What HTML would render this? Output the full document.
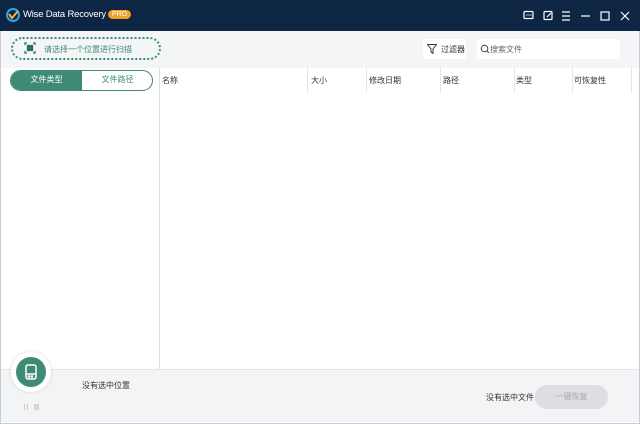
<!DOCTYPE html><html><head><meta charset="utf-8"><style>
*{margin:0;padding:0;box-sizing:border-box}
body{width:640px;height:424px;overflow:hidden;background:#fff;font-family:"Liberation Sans","Noto Sans CJK SC",sans-serif;position:relative;font-size:8px;color:#333}
.a{position:absolute}
</style></head><body>
<div class="a" style="left:0;top:0;width:640px;height:424px;border:1px solid #c9ccd0"></div>
<div class="a" style="left:0;top:0;width:640px;height:31px;background:#0c2643"></div>
<svg class="a" style="left:5px;top:7px" width="16" height="16" viewBox="0 0 16 16"><circle cx="8" cy="8" r="6" fill="none" stroke="#3aa0e6" stroke-width="2"/><path d="M4 7l3 4 6-7" stroke="#f5b342" stroke-width="2" fill="none"/></svg>
<div class="a" style="left:23px;top:9px;color:#fff;font-size:9.5px;letter-spacing:-0.2px;white-space:nowrap">Wise Data Recovery</div>
<div class="a" style="left:108px;top:10px;width:23px;height:9px;border-radius:5px;background:#f0a029;color:#fff;font-size:7px;line-height:9px;text-align:center">PRO</div>
<svg class="a" style="left:522px;top:10px" width="115" height="12" viewBox="0 0 115 12" stroke="#fff" fill="none" stroke-width="1.2"><rect x="2" y="1.5" width="9" height="7" rx="1"/><path d="M4.5 5h1M6.5 5h1M8.5 5h1"/><rect x="22" y="1.5" width="8" height="8" rx="1"/><path d="M25 7l4-4"/><path d="M40 2h8M40 6h8M40 10h8"/><path d="M59 6h9"/><rect x="79" y="2" width="8" height="8"/><path d="M99 2l8 8M107 2l-8 8"/></svg>
<div class="a" style="left:1px;top:31px;width:638px;height:37px;background:#f4f5f7"></div>
<div class="a" style="left:11px;top:37px;width:150px;height:23px;border:2px dotted #3e8a74;border-radius:12px"></div>
<svg class="a" style="left:24px;top:42px" width="12" height="12" viewBox="0 0 12 12" fill="none" stroke="#2f6f5f" stroke-width="1.3"><path d="M1 3V1h2M9 1h2v2M11 9v2H9M3 11H1V9"/><rect x="3.5" y="3.5" width="5" height="5" fill="#2f6f5f"/></svg>
<div class="a" style="left:44px;top:44px;color:#3e8a74;font-size:8px">请选择一个位置进行扫描</div>
<div class="a" style="left:423px;top:39px;width:43px;height:20px;background:#fff;border-radius:2px"></div>
<svg class="a" style="left:427px;top:44px" width="10" height="10" viewBox="0 0 10 10"><path d="M0.5 0.5h9L6 5v4.5L4 8V5z" fill="none" stroke="#333"/></svg>
<div class="a" style="left:441px;top:44px;font-size:8px">过滤器</div>
<div class="a" style="left:477px;top:39px;width:143px;height:20px;background:#fff;border-radius:2px"></div>
<svg class="a" style="left:480px;top:44px" width="10" height="10" viewBox="0 0 10 10"><circle cx="4.5" cy="4.5" r="3.3" fill="none" stroke="#444"/><path d="M7 7l2 2" stroke="#444"/></svg>
<div class="a" style="left:490px;top:44px;font-size:8px;color:#666">搜索文件</div>
<div class="a" style="left:159px;top:68px;width:1px;height:301px;background:#dcdfe3"></div>
<div class="a" style="left:10px;top:70px;width:143px;height:21px;border:1.5px solid #3e8a74;border-radius:11px;overflow:hidden;background:#fff"><div style="width:71px;height:100%;background:#3e8a74;color:#fff;line-height:18px;text-align:center;font-size:8px">文件类型</div><div class="a" style="left:71px;top:0;width:71px;line-height:18px;text-align:center;color:#3e8a74;font-size:8px">文件路径</div></div>
<div class="a" style="left:162px;top:75px;font-size:8px">名称</div>
<div class="a" style="left:311px;top:75px;font-size:8px">大小</div>
<div class="a" style="left:369px;top:75px;font-size:8px">修改日期</div>
<div class="a" style="left:443px;top:75px;font-size:8px">路径</div>
<div class="a" style="left:516px;top:75px;font-size:8px">类型</div>
<div class="a" style="left:574px;top:75px;font-size:8px">可恢复性</div>
<div class="a" style="left:307px;top:68px;width:1px;height:24px;background:#e3e5e8"></div>
<div class="a" style="left:366px;top:68px;width:1px;height:24px;background:#e3e5e8"></div>
<div class="a" style="left:440px;top:68px;width:1px;height:24px;background:#e3e5e8"></div>
<div class="a" style="left:514px;top:68px;width:1px;height:24px;background:#e3e5e8"></div>
<div class="a" style="left:572px;top:68px;width:1px;height:24px;background:#e3e5e8"></div>
<div class="a" style="left:631px;top:68px;width:1px;height:24px;background:#e3e5e8"></div>
<div class="a" style="left:1px;top:369px;width:638px;height:53px;background:#f3f4f6;border-top:1px solid #e1e3e6"></div>
<div class="a" style="left:11px;top:352px;width:40px;height:40px;border-radius:50%;background:#fff;box-shadow:0 0 4px rgba(0,0,0,.12)"></div>
<div class="a" style="left:16px;top:357px;width:30px;height:30px;border-radius:50%;background:#3e8a74"></div>
<svg class="a" style="left:24px;top:364px" width="14" height="16" viewBox="0 0 14 16" fill="none" stroke="#fff" stroke-width="1.5"><rect x="2" y="1" width="10" height="14" rx="2"/><path d="M2 10h10"/><circle cx="5" cy="12.5" r=".6" fill="#fff"/><circle cx="8" cy="12.5" r=".6" fill="#fff"/></svg>
<div class="a" style="left:24px;top:404px;width:4px;height:6px;border-left:1px solid #ccc;border-right:1px solid #ccc"></div>
<div class="a" style="left:34px;top:404px;width:5px;height:6px;background:#d5d5d5"></div>
<div class="a" style="left:82px;top:380px;font-size:8px">没有选中位置</div>
<div class="a" style="left:486px;top:392px;font-size:8px">没有选中文件</div>
<div class="a" style="left:535px;top:385px;width:73px;height:24px;border-radius:12px;background:#dcdee2;color:#aaa;text-align:center;line-height:24px;font-size:8px">一键恢复</div>
</body></html>
